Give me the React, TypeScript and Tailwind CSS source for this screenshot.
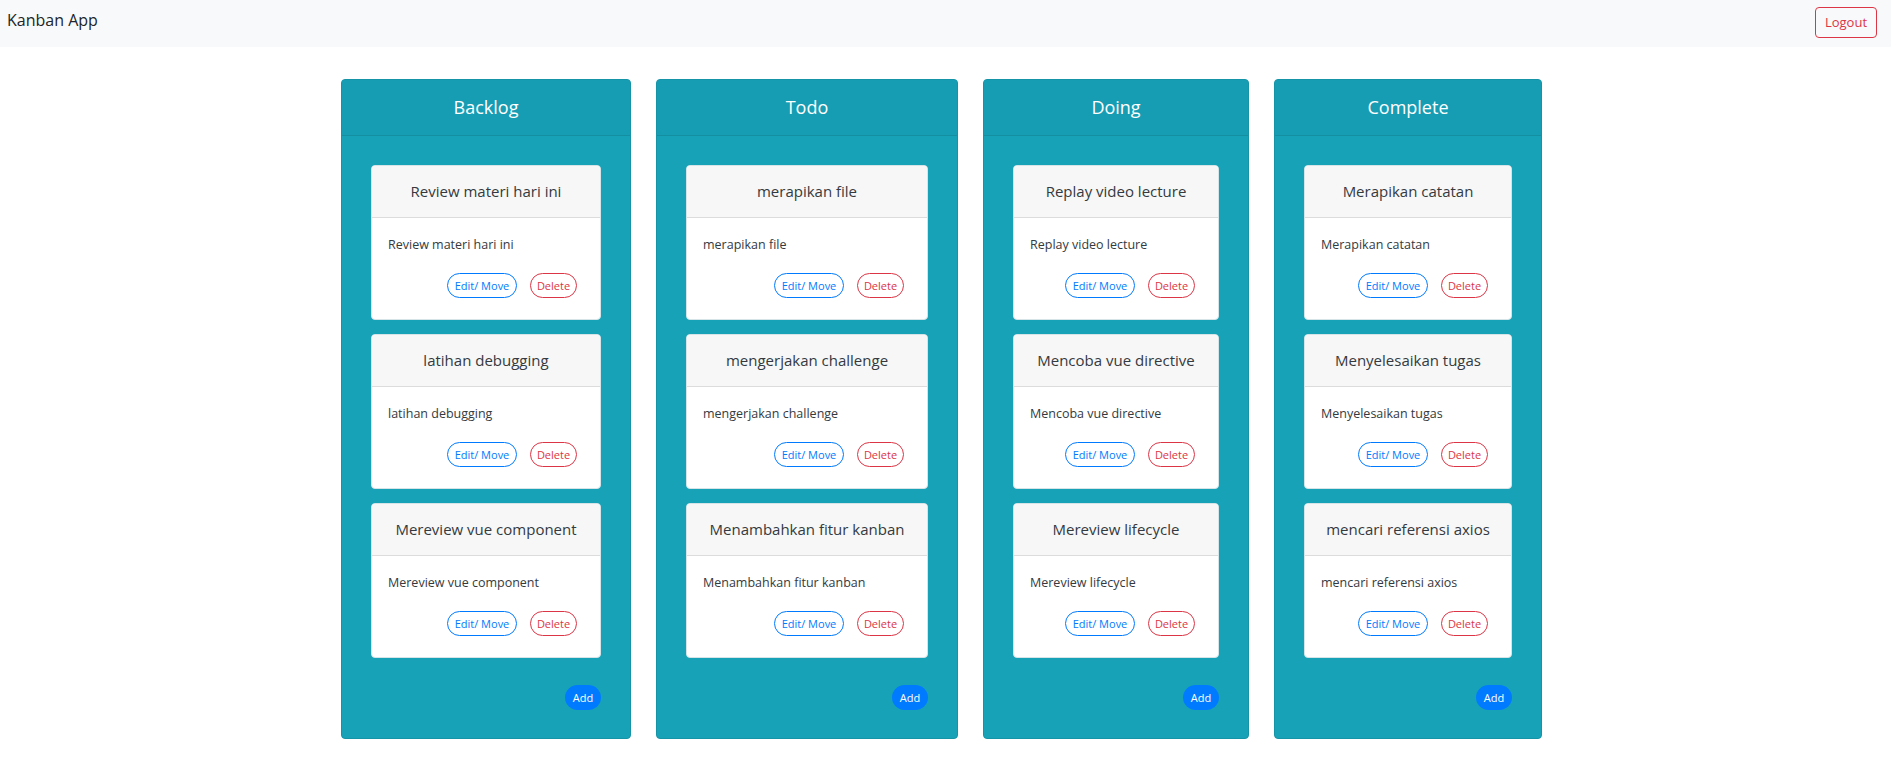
import React from 'react';

type Task = { title: string; description: string };
type Column = { name: string; width: string; cardWidth: string; tasks: Task[] };

const columns: Column[] = [
  {
    name: 'Backlog',
    width: 'w-[290px]',
    cardWidth: 'w-[230px]',
    tasks: [
      { title: 'Review materi hari ini', description: 'Review materi hari ini' },
      { title: 'latihan debugging', description: 'latihan debugging' },
      { title: 'Mereview vue component', description: 'Mereview vue component' }
    ]
  },
  {
    name: 'Todo',
    width: 'w-[302px]',
    cardWidth: 'w-[242px]',
    tasks: [
      { title: 'merapikan file', description: 'merapikan file' },
      { title: 'mengerjakan challenge', description: 'mengerjakan challenge' },
      { title: 'Menambahkan fitur kanban', description: 'Menambahkan fitur kanban' }
    ]
  },
  {
    name: 'Doing',
    width: 'w-[266px]',
    cardWidth: 'w-[206px]',
    tasks: [
      { title: 'Replay video lecture', description: 'Replay video lecture' },
      { title: 'Mencoba vue directive', description: 'Mencoba vue directive' },
      { title: 'Mereview lifecycle', description: 'Mereview lifecycle' }
    ]
  },
  {
    name: 'Complete',
    width: 'w-[268px]',
    cardWidth: 'w-[208px]',
    tasks: [
      { title: 'Merapikan catatan', description: 'Merapikan catatan' },
      { title: 'Menyelesaikan tugas', description: 'Menyelesaikan tugas' },
      { title: 'mencari referensi axios', description: 'mencari referensi axios' }
    ]
  }
];

const TaskCard = ({ task, width }: { task: Task; width: string }) => (
  <div className={`${width} bg-white rounded-[4px] border border-[#d7e4e7] overflow-hidden`}>
    <div className="h-[52px] bg-[#f7f7f7] border-b border-[#dcdcdc] flex items-center justify-center text-[15px] text-[#343a40]">
      {task.title}
    </div>
    <div className="pt-[17px] pb-[21px] pl-[16px] pr-[23px]">
      <p className="text-[12.5px] leading-[20px] text-[#343a40]">{task.description}</p>
      <div className="mt-[18px] flex justify-end gap-[13px]">
        <button className="w-[70px] h-[25px] rounded-full border border-[#007bff] text-[#007bff] text-[11px] leading-none bg-white">
          Edit/ Move
        </button>
        <button className="w-[47px] h-[25px] rounded-full border border-[#dc3545] text-[#dc3545] text-[11px] leading-none bg-white">
          Delete
        </button>
      </div>
    </div>
  </div>
);

const BoardColumn = ({ column }: { column: Column }) => (
  <div className={`${column.width} bg-[#17a2b8] border border-[#1593a7] rounded-[4px] overflow-hidden`}>
    <div className="h-[56px] bg-[#169db3] border-b border-[#148ea1] flex items-center justify-center text-white text-[18px]">
      {column.name}
    </div>
    <div className="px-[29px] pt-[29px] pb-[28px] flex flex-col items-center">
      <div className="flex flex-col gap-[14px]">
        {column.tasks.map((task) => (
          <TaskCard key={task.title} task={task} width={column.cardWidth} />
        ))}
      </div>
      <div className={`${column.cardWidth} flex justify-end mt-[27px]`}>
        <button className="w-[36px] h-[25px] rounded-full bg-[#007bff] text-white text-[11px] font-medium leading-none">
          Add
        </button>
      </div>
    </div>
  </div>
);

export default function App() {
  return (
    <div className="min-h-screen bg-white font-['Open_Sans','Noto_Sans',sans-serif]">
      <nav className="h-[47px] bg-[#f8f9fa] flex items-center justify-between pl-[7px] pr-[14px]">
        <span className="text-[16px] text-[#212529] -mt-[7px]">Kanban App</span>
        <button className="w-[62px] h-[31px] rounded-[4px] border border-[#dc3545] text-[#dc3545] text-[13px] leading-none bg-transparent -mt-[3px]">
          Logout
        </button>
      </nav>
      <main className="flex justify-center items-start gap-[25px] pt-[32px] pr-[8px]">
        {columns.map((column) => (
          <BoardColumn key={column.name} column={column} />
        ))}
      </main>
    </div>
  );
}
